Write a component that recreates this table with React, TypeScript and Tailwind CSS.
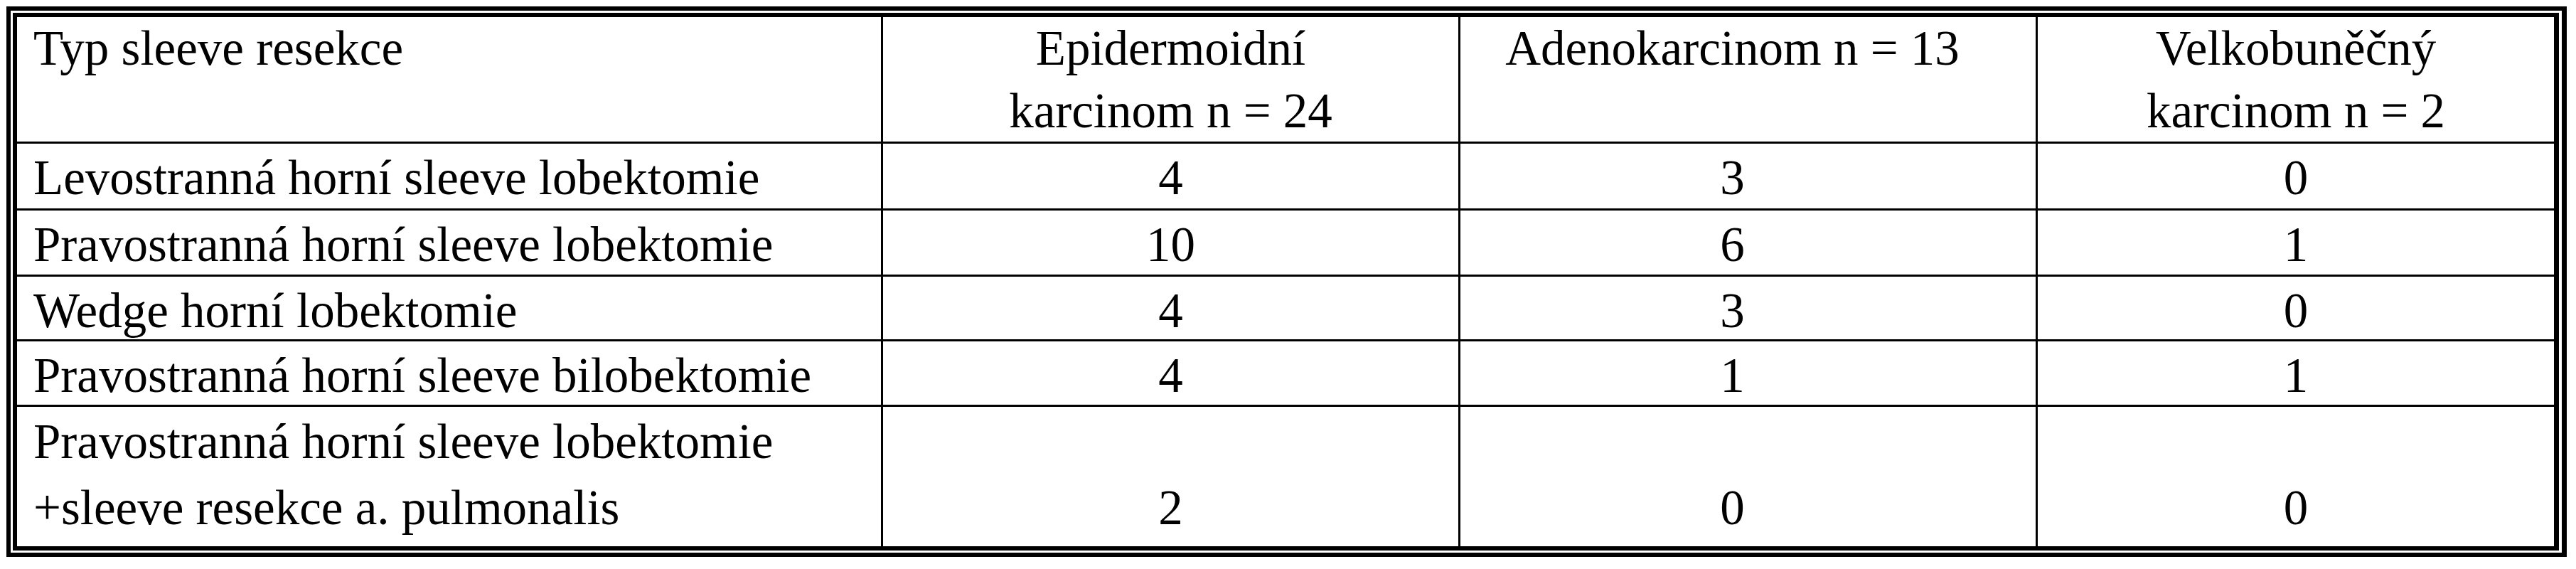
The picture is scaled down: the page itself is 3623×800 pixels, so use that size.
import React from "react";

type Row = { label: React.ReactNode; a: string; b: string; c: string };

const rows: Row[] = [
  { label: "Levostranná horní sleeve lobektomie", a: "4", b: "3", c: "0" },
  { label: "Pravostranná horní sleeve lobektomie", a: "10", b: "6", c: "1" },
  { label: "Wedge horní lobektomie", a: "4", b: "3", c: "0" },
  { label: "Pravostranná horní sleeve bilobektomie", a: "4", b: "1", c: "1" },
];

export default function App() {
  return (
    <div className="min-h-[800px] w-[3623px] bg-white pl-[9px] pt-[9px] text-black font-['Liberation_Serif','Times_New_Roman',serif] text-[69px]">
      <div className="w-[3601px] border-[6px] border-r-[7px] border-black bg-white p-[3px] pr-[4px]">
        <div className="border-[6px] border-r-[7px] border-black">
          <div className="grid grid-cols-[1215px_809px_809px_726px] grid-rows-[175px_91px_90px_88px_89px_196px] gap-[3px] bg-black">
            {/* header */}
            <div className="bg-white pl-[23px] leading-[88px] whitespace-nowrap">Typ sleeve resekce</div>
            <div className="bg-white text-center leading-[88px] whitespace-nowrap">
              Epidermoidní
              <br />
              karcinom n = 24
            </div>
            <div className="bg-white pr-[44px] text-center leading-[88px] whitespace-nowrap">Adenokarcinom n = 13</div>
            <div className="bg-white text-center leading-[88px] whitespace-nowrap">
              Velkobuněčný
              <br />
              karcinom n = 2
            </div>

            {rows.map((r, i) => (
              <React.Fragment key={i}>
                <div className="bg-white pl-[23px] pt-[4px] leading-[88px] whitespace-nowrap">{r.label}</div>
                <div className="bg-white pt-[4px] text-center leading-[88px]">{r.a}</div>
                <div className="bg-white pr-[44px] pt-[4px] text-center leading-[88px]">{r.b}</div>
                <div className="bg-white pt-[4px] text-center leading-[88px]">{r.c}</div>
              </React.Fragment>
            ))}

            {/* last row */}
            <div className="bg-white pl-[23px] pt-[3px] leading-[93px] whitespace-nowrap">
              Pravostranná horní sleeve lobektomie
              <br />
              +sleeve resekce a. pulmonalis
            </div>
            <div className="flex flex-col justify-end bg-white pb-[7px] text-center leading-[93px]">2</div>
            <div className="flex flex-col justify-end bg-white pb-[7px] pr-[44px] text-center leading-[93px]">0</div>
            <div className="flex flex-col justify-end bg-white pb-[7px] text-center leading-[93px]">0</div>
          </div>
        </div>
      </div>
    </div>
  );
}
